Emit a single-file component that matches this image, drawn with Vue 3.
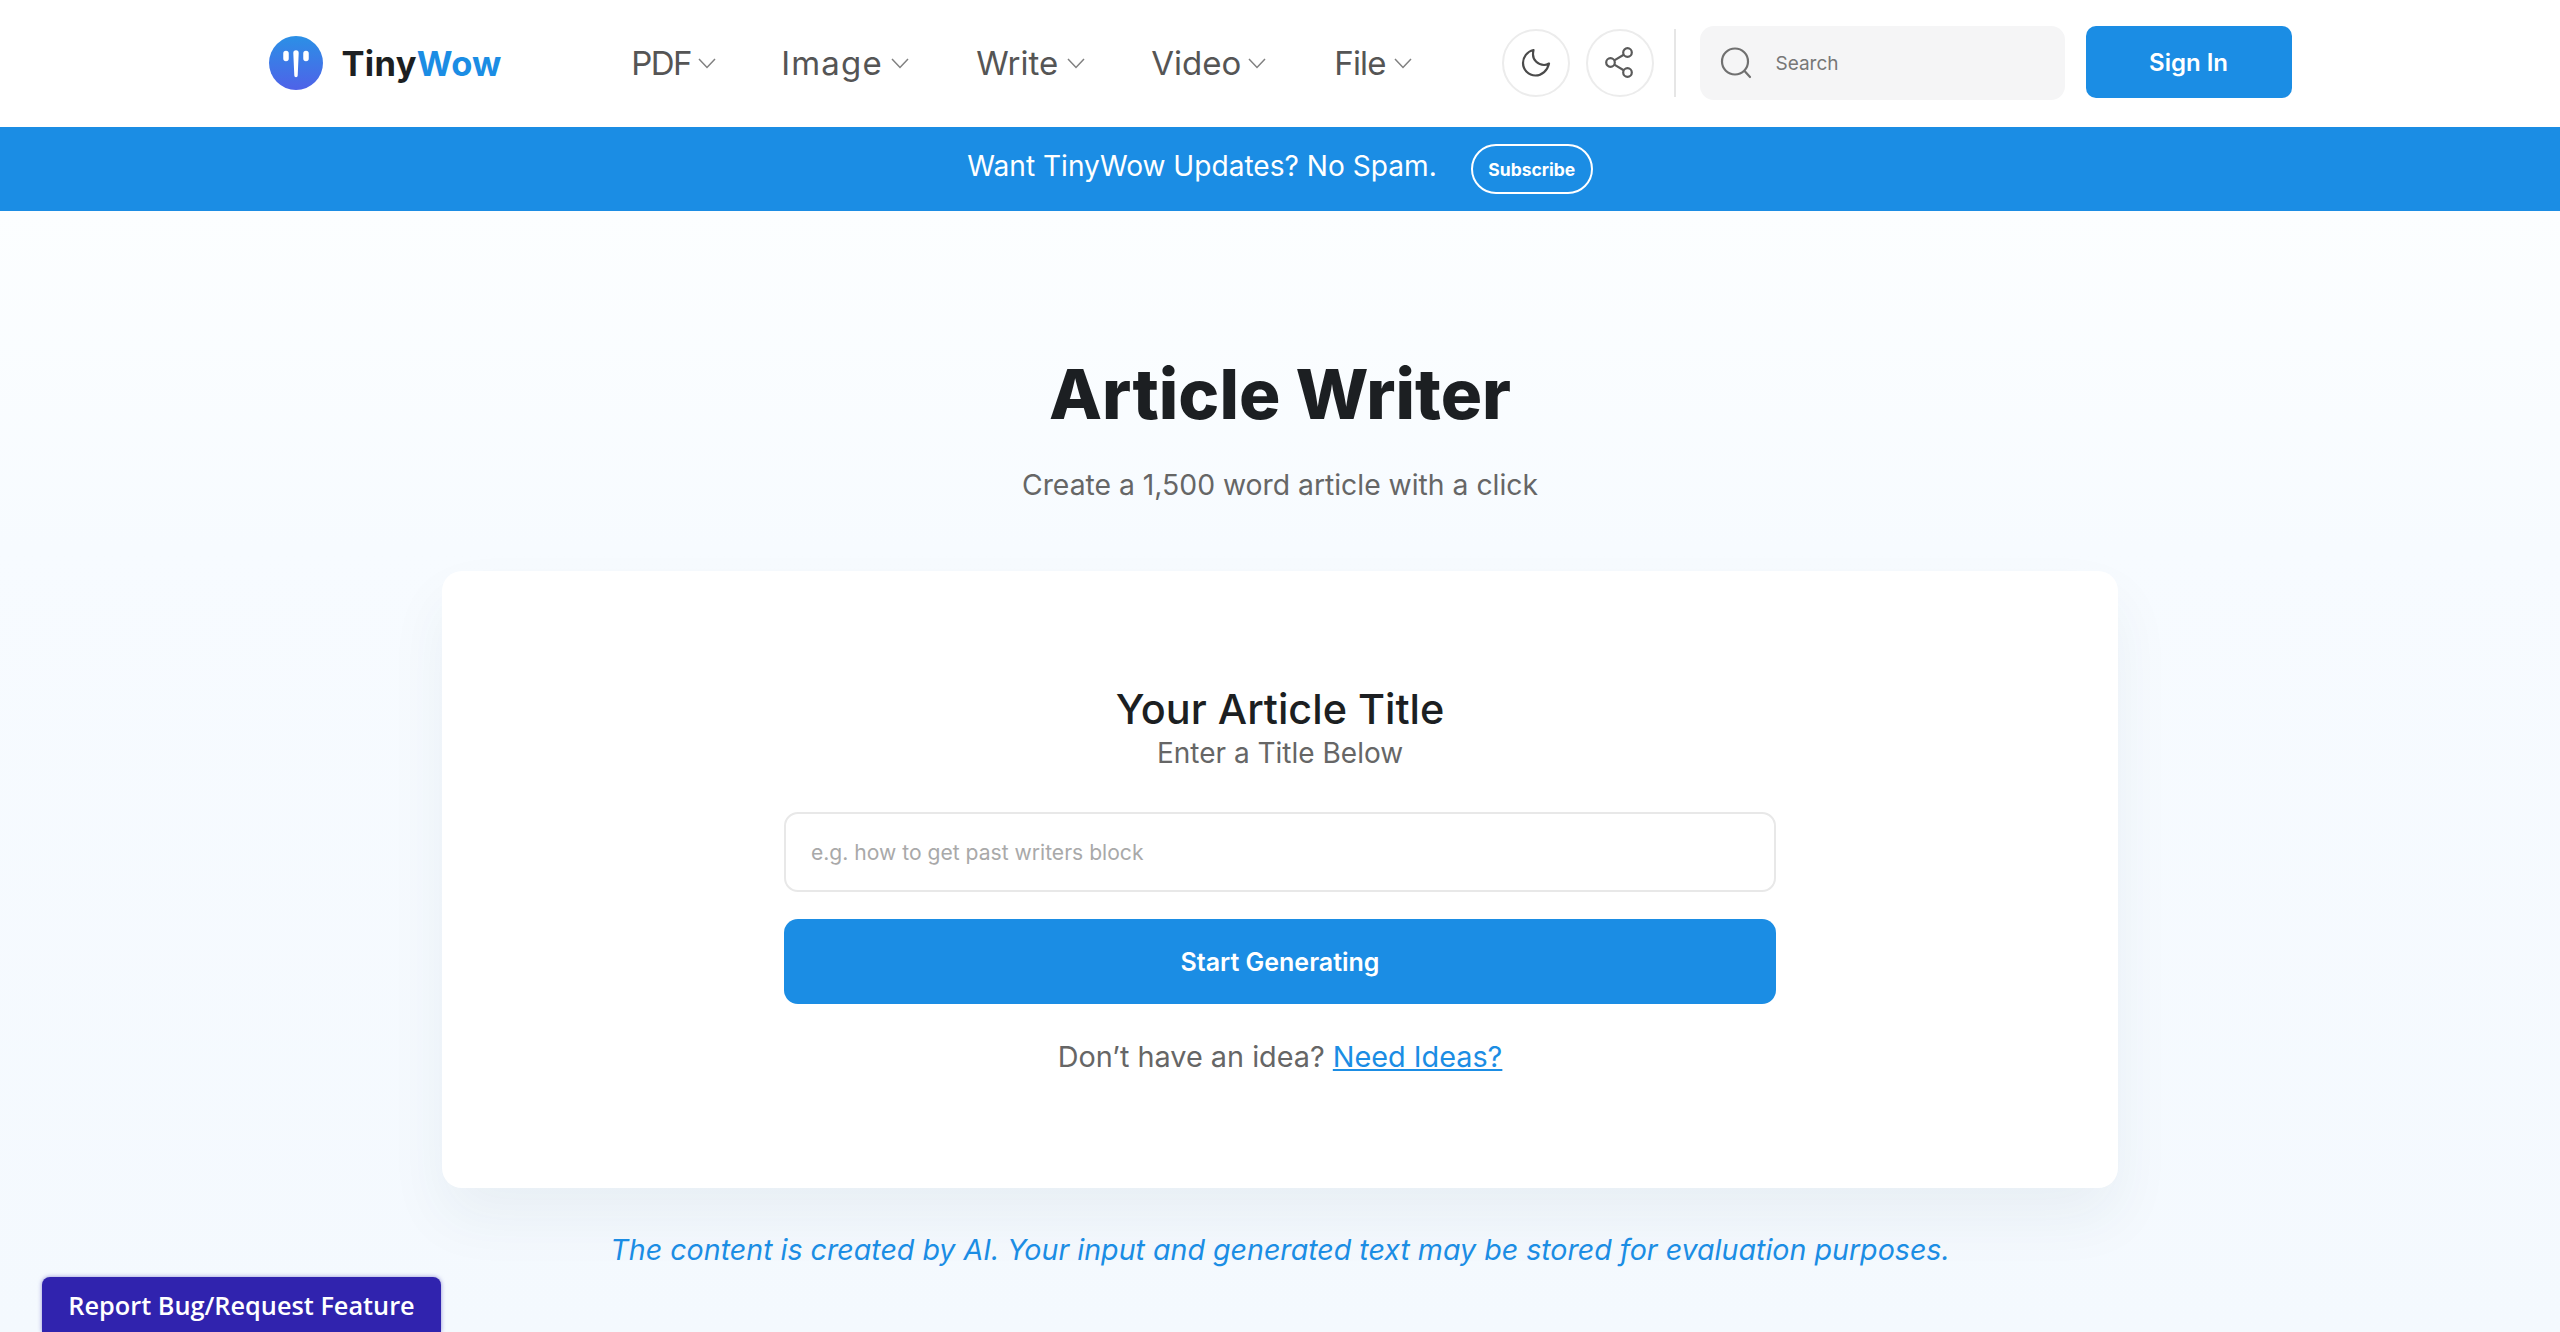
<script setup>
// start-to-start widths of the nav items, Inter runs a bit different from the original font
const navItems = [
  { label: 'PDF', width: 150, text: 67, spacing: -1.5 },
  { label: 'Image', width: 195, text: 110, spacing: 1.2 },
  { label: 'Write', width: 175, text: 91, spacing: 0 },
  { label: 'Video', width: 183, text: 97, spacing: 0 },
  { label: 'File', width: 100, text: 60, spacing: -0.8 }
]
</script>

<template>
  <div class="page">
    <header class="header">
      <div class="header-inner">
        <a class="logo">
          <svg class="logo-mark" viewBox="0 0 54 54" width="54" height="54">
            <defs>
              <linearGradient id="logoGrad" x1="0" y1="0" x2="0" y2="1">
                <stop offset="0" stop-color="#2b90e6" />
                <stop offset="1" stop-color="#4f62e8" />
              </linearGradient>
            </defs>
            <circle cx="27" cy="27" r="27" fill="url(#logoGrad)" />
            <path d="M17 17.500v5M37 17.500v5" stroke="#fff" stroke-width="5.500" stroke-linecap="round" fill="none" />
            <path d="M24.300 17a2.700 2.700 0 0 1 5.400 0l-1 22.500a1.700 1.700 0 0 1-3.400 0z" fill="#fff" />
          </svg>
          <span class="logo-text">Tiny<span class="logo-blue">Wow</span></span>
        </a>

        <nav class="nav">
          <a v-for="item in navItems" :key="item.label" class="nav-item" :style="{ width: item.width + 'px' }">
            <span :style="{ width: item.text + 'px', letterSpacing: item.spacing + 'px' }">{{ item.label }}</span>
            <svg width="18" height="11" viewBox="0 0 18 11" fill="none">
              <path d="M1 1l8 8.500 8-8.500" stroke="#808080" stroke-width="1.500" />
            </svg>
          </a>
        </nav>

        <button class="round-btn">
          <svg width="32" height="32" viewBox="0 0 32 32" fill="none">
            <path d="M13.500 3C7 4.500 3 10 3 16c0 6.800 5.500 12.500 12.500 12.500 6.500 0 12-5 13.500-12-1.500 1-3.500 1.500-5 1.500-6 0-11-5-11-10.500 0-1.800.2-3 .5-4.500z" stroke="#4a4a4a" stroke-width="2.200" stroke-linejoin="round" />
          </svg>
        </button>
        <button class="round-btn share">
          <svg width="30" height="32" viewBox="0 0 30 32" fill="none" stroke="#5a5a5a" stroke-width="2.200">
            <circle cx="22.500" cy="5.500" r="4.300" />
            <circle cx="5.500" cy="15.500" r="4.300" />
            <circle cx="22.500" cy="25.500" r="4.300" />
            <path d="M9.300 13.400l9.400-5.700M9.300 17.600l9.400 5.700" />
          </svg>
        </button>
        <span class="divider"></span>

        <div class="search">
          <svg width="34" height="34" viewBox="0 0 34 34" fill="none" stroke="#707070" stroke-width="2.200">
            <circle cx="15" cy="15.500" r="13" />
            <path d="M25 25.500l5 5.500" stroke-linecap="round" />
          </svg>
          <span class="search-text">Search</span>
        </div>

        <button class="sign-in">Sign In</button>
      </div>
    </header>

    <div class="banner">
      <span class="banner-text">Want TinyWow Updates? No Spam.</span>
      <button class="subscribe">Subscribe</button>
    </div>

    <main class="main">
      <h1 class="title">Article Writer</h1>
      <p class="subtitle">Create a 1,500 word article with a click</p>

      <section class="card">
        <h2 class="card-title">Your Article Title</h2>
        <p class="card-sub">Enter a Title Below</p>
        <input class="title-input" type="text" placeholder="e.g. how to get past writers block" />
        <button class="generate">Start Generating</button>
        <p class="ideas">Don’t have an idea? <a class="ideas-link">Need Ideas?</a></p>
      </section>

      <p class="notice">The content is created by AI. Your input and generated text may be stored for evaluation purposes.</p>
    </main>

    <button class="report">Report Bug/Request Feature</button>
  </div>
</template>

<style scoped>
.page {
  position: relative;
  height: 100vh;
  overflow: hidden;
  font-family: Inter, "Open Sans", sans-serif;
  background: #f4f9fe;
  color: #1c1f22;
}

.header {
  height: 127px;
  padding-bottom: 1px;
  box-sizing: border-box;
  background: #fff;
}

.header-inner {
  width: 2023px;
  height: 100%;
  margin: 0 auto;
  display: flex;
  align-items: center;
}

.logo {
  display: flex;
  align-items: center;
  gap: 19px;
  width: 363px;
}

.logo-text {
  font-size: 34.500px;
  font-weight: 700;
  letter-spacing: 0.300px;
  color: #1c1f22;
}

.logo-blue {
  color: #1b8de4;
}

.nav {
  display: flex;
  align-items: center;
  width: 871px;
}

.nav-item {
  display: flex;
  align-items: center;
  font-size: 33px;
  color: #555;
}

.nav-item span {
  white-space: nowrap;
}

.round-btn {
  flex: none;
  width: 68px;
  height: 68px;
  margin-right: 16px;
  padding: 0;
  display: flex;
  align-items: center;
  justify-content: center;
  background: #fff;
  border: 2px solid #ececec;
  border-radius: 50%;
}

.share {
  margin-right: 20px;
}

.divider {
  flex: none;
  width: 2px;
  height: 68px;
  margin-right: 24px;
  background: #e6e6e6;
}

.search {
  flex: none;
  width: 365px;
  height: 74px;
  margin-right: 21px;
  padding-left: 20px;
  box-sizing: border-box;
  display: flex;
  align-items: center;
  gap: 22px;
  background: #f5f5f6;
  border-radius: 14px;
}

.search-text {
  font-size: 19px;
  color: #777;
}

.sign-in {
  flex: none;
  width: 206px;
  height: 72px;
  margin-bottom: 2px;
  font-family: inherit;
  font-size: 24px;
  font-weight: 600;
  color: #fff;
  background: #1b8de4;
  border: none;
  border-radius: 10px;
}

.banner {
  height: 84px;
  display: flex;
  align-items: center;
  justify-content: center;
  gap: 34px;
  background: #1b8de4;
}

.banner-text {
  margin-bottom: 6px;
  font-size: 28.100px;
  color: #fff;
}

.subscribe {
  width: 122px;
  height: 50px;
  padding: 0;
  font-family: inherit;
  font-size: 17.500px;
  font-weight: 700;
  color: #fff;
  background: transparent;
  border: 2px solid #fff;
  border-radius: 25px;
}

.main {
  display: flex;
  flex-direction: column;
  align-items: center;
  height: 1121px;
  background: linear-gradient(180deg, #fcfeff 0, #f7fbff 30%, #f4f9fe 100%);
}

.title {
  margin: 133px 0 0;
  font-size: 69px;
  line-height: 100px;
  font-weight: 800;
  color: #1c1f22;
}

.subtitle {
  margin: 19px 0 0;
  font-size: 28.300px;
  line-height: 44px;
  color: #666;
}

.card {
  width: 1676px;
  height: 617px;
  margin-top: 64px;
  padding-top: 110px;
  box-sizing: border-box;
  display: flex;
  flex-direction: column;
  align-items: center;
  background: #fff;
  border-radius: 20px;
  box-shadow: 0 30px 60px rgba(40, 60, 90, 0.06);
}

.card-title {
  margin: 0;
  font-size: 41.400px;
  line-height: 56px;
  font-weight: 500;
  color: #1c1f22;
}

.card-sub {
  margin: 0;
  font-size: 28px;
  line-height: 32px;
  color: #666;
}

.title-input {
  width: 992px;
  height: 80px;
  margin-top: 43px;
  padding: 0 25px;
  box-sizing: border-box;
  font-family: inherit;
  font-size: 21.100px;
  background: #fff;
  border: 2px solid #e8e8e8;
  border-radius: 14px;
  outline: none;
}

.title-input::placeholder {
  color: #a9a9a9;
}

.generate {
  width: 992px;
  height: 85px;
  margin-top: 27px;
  font-family: inherit;
  font-size: 25px;
  font-weight: 600;
  color: #fff;
  background: #1b8de4;
  border: none;
  border-radius: 14px;
}

.ideas {
  margin: 32px 0 0;
  font-size: 28.800px;
  line-height: 42px;
  color: #666;
}

.ideas-link {
  color: #1b8de4;
  text-decoration: underline;
}

.notice {
  margin: 40px 0 0;
  font-size: 28.600px;
  line-height: 44px;
  font-style: italic;
  color: #1b8de4;
}

.report {
  position: absolute;
  left: 42px;
  bottom: 0;
  width: 399px;
  height: 55px;
  padding: 0;
  font-family: "Open Sans", sans-serif;
  font-size: 25.300px;
  font-weight: 600;
  color: #fff;
  background: #3023ae;
  border: none;
  border-radius: 8px 8px 0 0;
  box-shadow: 0 0 4px rgba(48, 35, 174, 0.5);
}
</style>
